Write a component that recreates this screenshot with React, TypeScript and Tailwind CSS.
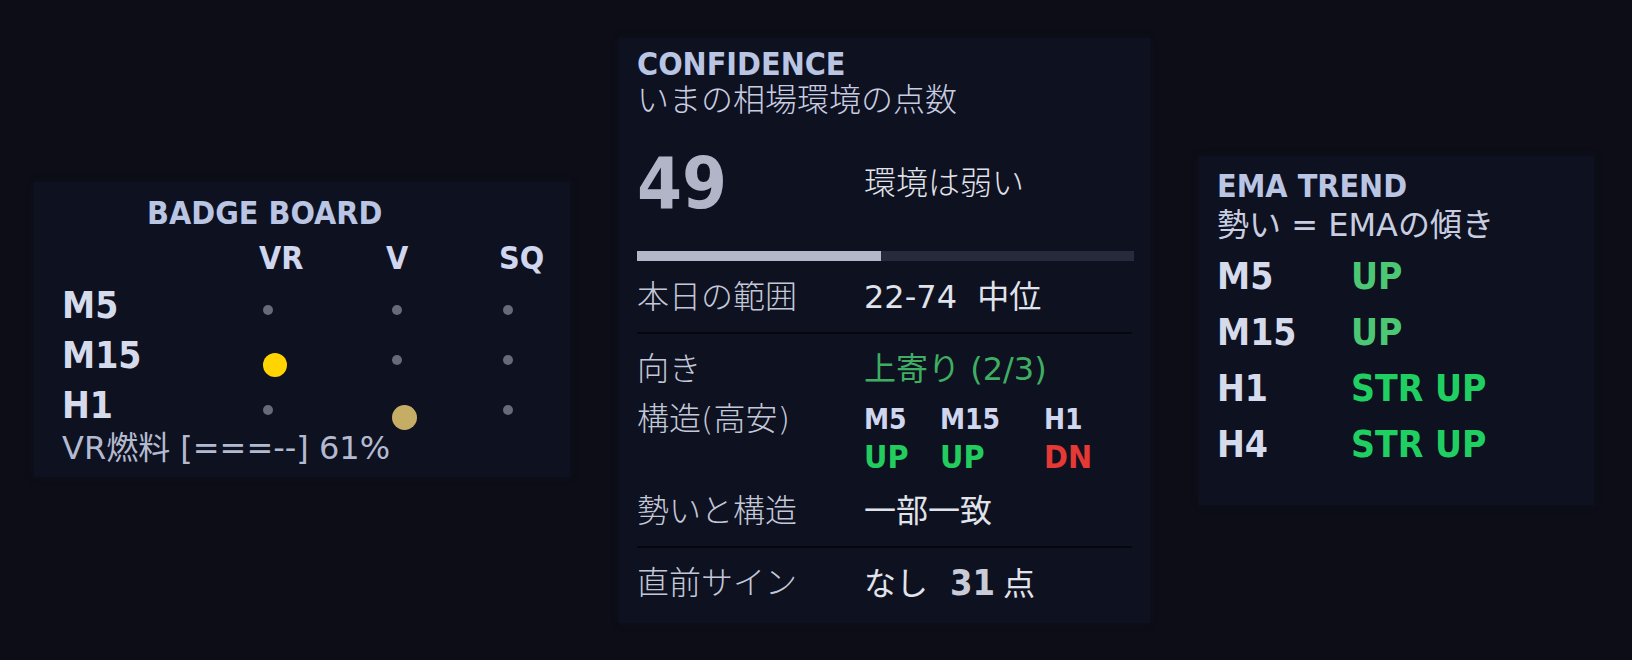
const sans =
  "[font-family:'DejaVu_Sans_Condensed','DejaVu_Sans','Noto_Sans_CJK_JP',sans-serif] [font-stretch:condensed]";
const plain = "[font-family:'DejaVu_Sans','Noto_Sans_CJK_JP',sans-serif] [font-stretch:normal]";

type Dot = "none" | "gold" | "tan";

const badgeRows: { tf: string; dots: Dot[] }[] = [
  { tf: "M5", dots: ["none", "none", "none"] },
  { tf: "M15", dots: ["gold", "none", "none"] },
  { tf: "H1", dots: ["none", "tan", "none"] },
];

function BadgeDot({ kind }: { kind: Dot }) {
  if (kind === "gold") return <span className="mt-[22px] block h-[24px] w-[24px] rounded-full bg-[#ffd400]" />;
  if (kind === "tan") return <span className="mt-[24px] block h-[25px] w-[25px] rounded-full bg-[#c6ad66]" />;
  return <span className="mt-[24px] block h-[10px] w-[10px] rounded-full bg-[#666a7b]" />;
}

function BadgeBoard() {
  return (
    <div className="mt-[182px] h-[295px] w-[536px] shrink-0 bg-[#0e1120] pl-[28px] pt-[13px] shadow-[0_0_6px_#0e1120]">
      <div className="pl-[85px] text-[32px] leading-[36px] font-bold text-[#b9c5e3]">BADGE BOARD</div>
      <div className="mt-[7px] flex text-[32px] leading-[40px] font-bold text-[#cfd6ee]">
        <span className="w-[197px]" />
        <span className="w-[127px]">VR</span>
        <span className="w-[113px]">V</span>
        <span>SQ</span>
      </div>
      <div className="mt-[3px]">
        {badgeRows.map((r) => (
          <div key={r.tf} className="flex h-[50px] items-start">
            <span className="w-[201px] text-[37px] leading-[50px] font-bold text-[#d6dbeb]">{r.tf}</span>
            <span className="w-[129px]">
              <BadgeDot kind={r.dots[0]} />
            </span>
            <span className="w-[111px]">
              <BadgeDot kind={r.dots[1]} />
            </span>
            <span>
              <BadgeDot kind={r.dots[2]} />
            </span>
          </div>
        ))}
      </div>
      <div className={`text-[32px] leading-[34px] text-[#b3bad0] ${plain}`}>VR燃料 [===--] 61%</div>
    </div>
  );
}

function Divider() {
  return <div className="my-[10px] h-[2px] bg-[#05070d]" />;
}

function ConfRow({ label, children }: { label: string; children: React.ReactNode }) {
  return (
    <div className={`flex text-[32px] leading-[50px] ${plain}`}>
      <span className="w-[227px] shrink-0 font-light text-[#c3c8d8]">{label}</span>
      <span className="text-[#e1e3ea]">{children}</span>
    </div>
  );
}

function Confidence() {
  return (
    <div className="mt-[38px] h-[585px] w-[531px] shrink-0 bg-[#0e1120] px-[18px] pt-[8px] shadow-[0_0_6px_#0e1120]">
      <div className="text-[32px] leading-[36px] font-bold text-[#b9c5e3]">CONFIDENCE</div>
      <div className={`text-[32px] leading-[36px] font-light text-[#c8cde0] ${plain}`}>いまの相場環境の点数</div>
      <div className="mt-[22px] flex items-center">
        <span className="w-[227px] text-[72px] leading-[86px] font-bold text-[#b2b5c7]">49</span>
        <span className={`text-[32px] font-light text-[#e1e3ea] ${plain}`}>環境は弱い</span>
      </div>
      <div className="mt-[25px] flex h-[10px] w-[497px] bg-[#272a3a]">
        <div className="h-full w-[49%] bg-[#b4b7c8]" />
      </div>
      <div className="mt-[11px]">
        <ConfRow label="本日の範囲">22-74&nbsp; 中位</ConfRow>
      </div>
      <Divider />
      <ConfRow label="向き">
        <span className="text-[#3fae62]">上寄り (2/3)</span>
      </ConfRow>
      <div className="flex">
        <span className={`w-[227px] shrink-0 text-[32px] leading-[50px] font-light text-[#c3c8d8] ${plain}`}>
          構造(高安)
        </span>
        <div className="grid grid-cols-[76px_104px_auto] pt-[10px]">
          <span className="text-[28px] leading-[32px] font-bold text-[#cfd6ee]">M5</span>
          <span className="text-[28px] leading-[32px] font-bold text-[#cfd6ee]">M15</span>
          <span className="text-[28px] leading-[32px] font-bold text-[#cfd6ee]">H1</span>
          <span className="text-[32px] leading-[42px] font-bold text-[#22cc5e]">UP</span>
          <span className="text-[32px] leading-[42px] font-bold text-[#22cc5e]">UP</span>
          <span className="text-[32px] leading-[42px] font-bold text-[#e53935]">DN</span>
        </div>
      </div>
      <div className="mt-[8px]">
        <ConfRow label="勢いと構造">一部一致</ConfRow>
      </div>
      <Divider />
      <ConfRow label="直前サイン">
        なし
        <span className={`ml-[22px] mr-[8px] text-[36px] font-bold text-[#c9cbd6] ${sans}`}>31</span>点
      </ConfRow>
    </div>
  );
}

const emaRows = [
  { tf: "M5", v: "UP", c: "text-[#4cc774]" },
  { tf: "M15", v: "UP", c: "text-[#4cc774]" },
  { tf: "H1", v: "STR UP", c: "text-[#20cf62]" },
  { tf: "H4", v: "STR UP", c: "text-[#20cf62]" },
];

function EmaTrend() {
  return (
    <div className="mt-[156px] h-[349px] w-[395px] shrink-0 bg-[#0e1120] pl-[18px] pt-[12px] shadow-[0_0_6px_#0e1120]">
      <div className="text-[32px] leading-[36px] font-bold text-[#b9c5e3]">EMA TREND</div>
      <div className={`mt-[3px] text-[32px] leading-[36px] text-[#c8cde0] ${plain}`}>勢い = EMAの傾き</div>
      <div className="mt-[6px]">
        {emaRows.map((r) => (
          <div key={r.tf} className="flex text-[37px] leading-[56px] font-bold">
            <span className="w-[134px] text-[#d6dbeb]">{r.tf}</span>
            <span className={r.c}>{r.v}</span>
          </div>
        ))}
      </div>
    </div>
  );
}

export default function App() {
  return (
    <div className={`flex h-[660px] w-[1632px] items-start gap-[49px] overflow-hidden bg-[#0c0d16] pl-[34px] ${sans}`}>
      <BadgeBoard />
      <Confidence />
      <EmaTrend />
    </div>
  );
}
